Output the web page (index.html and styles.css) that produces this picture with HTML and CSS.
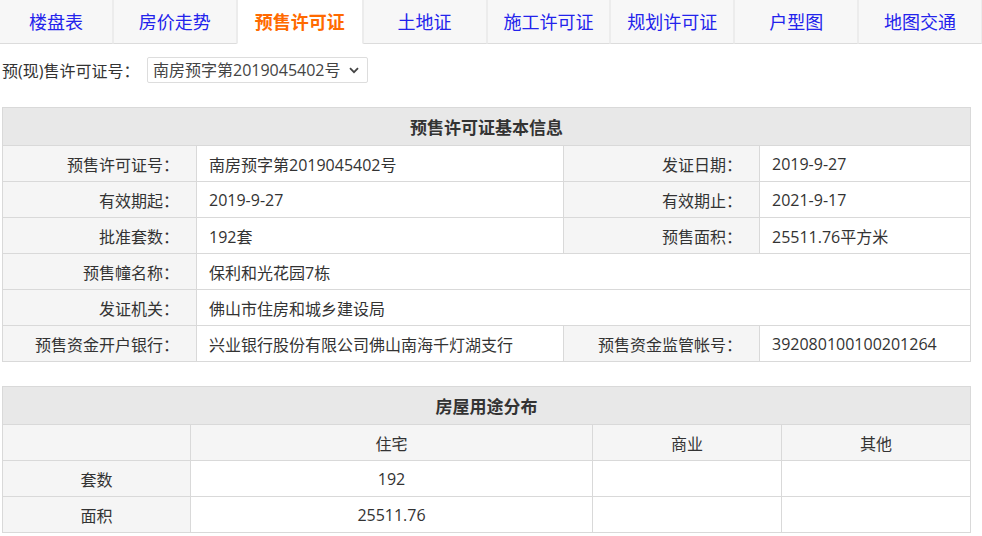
FILE: index.html
```html
<!DOCTYPE html>
<html lang="zh-CN">
<head>
    <meta charset="UTF-8">
    <title>预售许可证</title>
    <link rel="stylesheet" href="styles.css">
</head>
<body>
    <!-- Tabs -->
    <div class="tabs">
        <a class="tab first">楼盘表</a>
        <a class="tab">房价走势</a>
        <a class="tab active">预售许可证</a>
        <a class="tab">土地证</a>
        <a class="tab">施工许可证</a>
        <a class="tab">规划许可证</a>
        <a class="tab">户型图</a>
        <a class="tab">地图交通</a>
    </div>

    <!-- Permit selector -->
    <div class="picker">
        <label for="permit">预(现)售许可证号：</label>
        <div class="select-wrap">
            <select id="permit">
                <option>南房预字第2019045402号</option>
            </select>
            <svg class="chevron" width="10" height="7" viewBox="0 0 10 7"><path d="M1 1.2 5 5.2 9 1.2" fill="none" stroke="#444" stroke-width="1.8"/></svg>
        </div>
    </div>

    <!-- Basic info -->
    <table class="info">
        <colgroup>
            <col style="width:194px"><col style="width:367px"><col style="width:196px"><col>
        </colgroup>
        <tr><th colspan="4" class="title">预售许可证基本信息</th></tr>
        <tr>
            <td class="label">预售许可证号：</td><td>南房预字第2019045402号</td>
            <td class="label">发证日期：</td><td>2019-9-27</td>
        </tr>
        <tr>
            <td class="label">有效期起：</td><td>2019-9-27</td>
            <td class="label">有效期止：</td><td>2021-9-17</td>
        </tr>
        <tr>
            <td class="label">批准套数：</td><td>192套</td>
            <td class="label">预售面积：</td><td>25511.76平方米</td>
        </tr>
        <tr>
            <td class="label">预售幢名称：</td><td colspan="3">保利和光花园7栋</td>
        </tr>
        <tr>
            <td class="label">发证机关：</td><td colspan="3">佛山市住房和城乡建设局</td>
        </tr>
        <tr>
            <td class="label">预售资金开户银行：</td><td>兴业银行股份有限公司佛山南海千灯湖支行</td>
            <td class="label">预售资金监管帐号：</td><td>392080100100201264</td>
        </tr>
    </table>

    <!-- Usage distribution -->
    <table class="usage">
        <colgroup>
            <col style="width:188px"><col style="width:402px"><col style="width:189px"><col>
        </colgroup>
        <tr><th colspan="4" class="title">房屋用途分布</th></tr>
        <tr class="head">
            <td class="label"></td><td class="label">住宅</td><td class="label">商业</td><td class="label">其他</td>
        </tr>
        <tr>
            <td class="label">套数</td><td>192</td><td></td><td></td>
        </tr>
        <tr>
            <td class="label">面积</td><td>25511.76</td><td></td><td></td>
        </tr>
    </table>
</body>
</html>
```

FILE: styles.css
```css
/* General */
body {
    margin: 0;
    font-family: "Open Sans", "Noto Sans CJK SC", sans-serif;
    font-size: 16px;
    color: #333;
    background: #fff;
}

/* Tabs */
.tabs {
    display: flex;
    height: 44px;
}
.tab {
    box-sizing: border-box;
    width: 124px;
    height: 44px;
    display: flex;
    align-items: center;
    justify-content: center;
    font-size: 18px;
    color: #2323ec;
    background: #f7f7f7;
    border-left: 1px solid #ececec;
    border-right: 1px solid #ececec;
    border-bottom: 1px solid #dcdcdc;
    padding-bottom: 1px;
}
.tab.first {
    width: 113px;
    border-left: none;
}
.tab.active {
    width: 126px;
    background: #fff;
    color: #ff6a00;
    font-weight: bold;
    border-bottom-color: #fff;
}

/* Picker */
.picker {
    display: flex;
    align-items: center;
    height: 26px;
    margin: 13px 0 0 2px;
}
.picker label {
    width: 145px;
    font-size: 16px;
    color: #333;
}
.select-wrap {
    position: relative;
}
.select-wrap select {
    appearance: none;
    box-sizing: border-box;
    width: 221px;
    height: 26px;
    padding: 0 0 0 5px;
    border: 1px solid #ddd;
    border-radius: 2px;
    background: #fff;
    font-family: inherit;
    font-size: 16px;
    color: #444;
}
.chevron {
    position: absolute;
    right: 9px;
    top: 10px;
    pointer-events: none;
}

/* Tables */
table {
    border-collapse: collapse;
    width: 969px;
    margin-left: 2px;
    table-layout: fixed;
}
table.info {
    margin-top: 24px;
}
table.usage {
    margin-top: 24px;
}
th, td {
    border: 1px solid #d9d9d9;
    height: 35px;
    padding: 0 12px;
    font-weight: normal;
    white-space: nowrap;
}
th.title {
    height: 37px;
    background: #e8e8e8;
    font-size: 17px;
    font-weight: bold;
    color: #333;
    text-align: center;
}
.info td.label {
    background: #f5f5f5;
    text-align: right;
    padding-right: 17px;
}
.usage td {
    text-align: center;
}
.usage td.label {
    background: #f5f5f5;
}
```
